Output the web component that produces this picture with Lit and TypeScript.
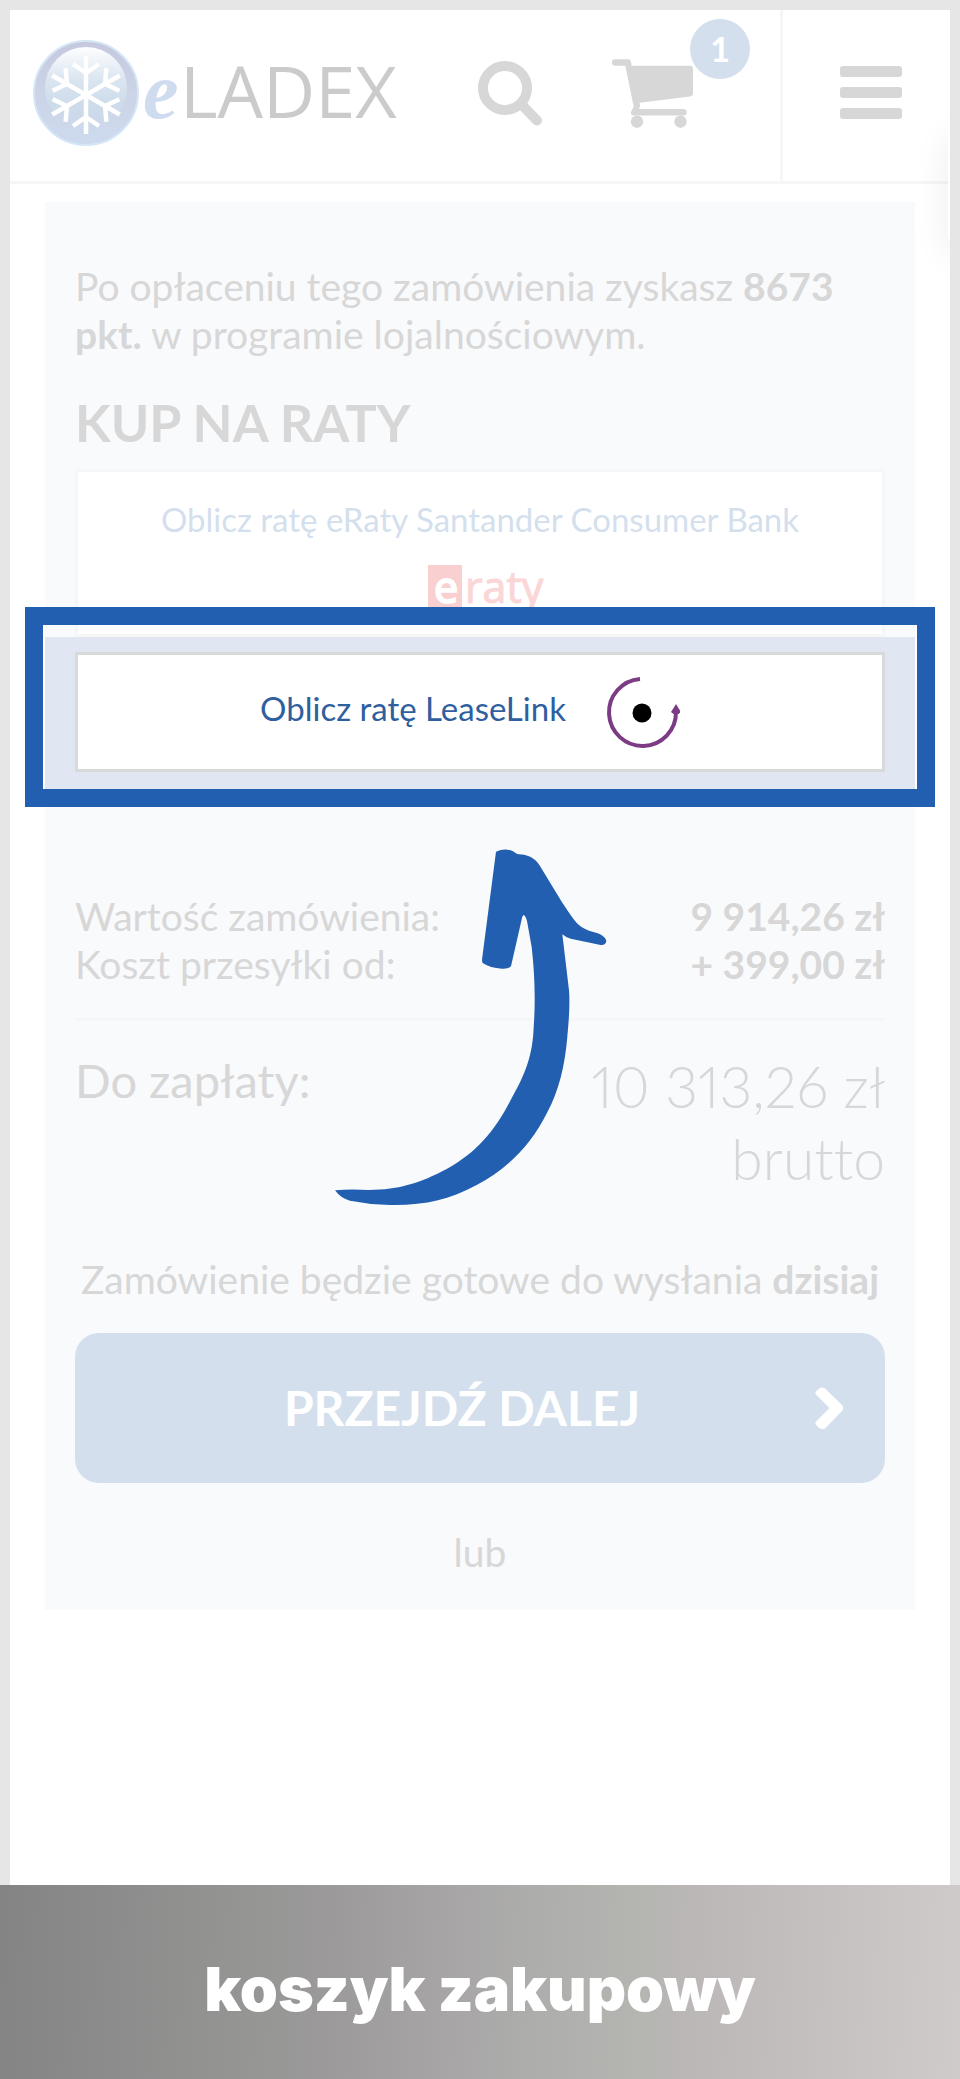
import { LitElement, html, css, svg } from "lit";
import { customElement } from "lit/decorators.js";

const flakeArms = [0, 60, 120, 180, 240, 300];

@customElement("shop-header")
class ShopHeader extends LitElement {
  static styles = css`
    :host { display: block; }
    .bar {
      display: flex;
      align-items: stretch;
      height: 171px;
      border-bottom: 3px solid #f6f6f6;
    }
    .logo { display: block; margin: 20px auto 0 14px; }
    .logo svg, .icon svg { display: block; }
    .word { font-family: "Open Sans", "Noto Sans", sans-serif; font-size: 72px; font-weight: 500; }
    .script { font-family: "Liberation Serif", serif; font-size: 80px; font-style: italic; font-weight: 700; }
    .icons { display: flex; align-items: flex-start; gap: 69px; padding: 48px 86px 0 0; }
    .icon {
      display: block;
      position: relative;
      padding: 0;
      border: 0;
      background: none;
      color: #d7d7d7;
      cursor: pointer;
    }
    .badge {
      position: absolute;
      left: 78px;
      top: -39px;
      width: 60px;
      height: 60px;
      border-radius: 50%;
      background: #d4dfee;
      color: #fff;
      font: 700 34px/60px Lato, sans-serif;
      text-align: center;
    }
    .menu {
      display: flex;
      align-items: center;
      box-sizing: border-box;
      width: 170px;
      padding: 0 0 6px 57px;
      border-left: 3px solid #f6f6f6;
    }
  `;

  render() {
    return html`
      <header class="bar">
        <a class="logo" href="#" aria-label="eLADEX">
          <svg width="380" height="140" viewBox="24 30 380 140">
            <defs>
              <linearGradient id="ball" x1="0" y1="0" x2="0" y2="1">
                <stop offset="0" stop-color="#c5c8df" />
                <stop offset="0.5" stop-color="#ccd4e7" />
                <stop offset="1" stop-color="#cddaee" />
              </linearGradient>
              <linearGradient id="gloss" x1="0" y1="0" x2="0" y2="1">
                <stop offset="0" stop-color="#fdfeff" />
                <stop offset="0.4" stop-color="#dae5f0" />
                <stop offset="0.7" stop-color="#cddcea" />
                <stop offset="1" stop-color="#cddaec" stop-opacity="0" />
              </linearGradient>
            </defs>
            <circle cx="86" cy="93" r="52" fill="url(#ball)" stroke="#d5e6f6" stroke-width="2" />
            <circle cx="86" cy="88" r="41" fill="url(#gloss)" />
            <g fill="none" stroke="#fff" stroke-width="4.500">
              ${flakeArms.map((a) => svg`<path transform="rotate(${a} 86 95)" d="M86 95V56M73 64l13 9 13-9" />`)}
            </g>
            <text class="script" x="143" y="118" fill="#cfdcf0">e</text>
            <text class="word" x="180" y="118" fill="#cbcbcb">LADEX</text>
          </svg>
        </a>
        <nav class="icons">
          <button class="icon" aria-label="Szukaj">
            <svg width="65" height="70" viewBox="478 58 65 70" fill="none" stroke="currentColor">
              <circle cx="505" cy="88" r="22" stroke-width="10" />
              <path d="M522 105l15 15.500" stroke-width="10" stroke-linecap="round" />
            </svg>
          </button>
          <button class="icon" aria-label="Koszyk, 1 produkt">
            <svg width="82" height="70" viewBox="612 58 82 70" fill="currentColor">
              <path d="M615 59.300h13c2.500 0 3.200 2 3.500 6.500H690c2 0 3 1.200 3 3V93c0 2-1 3.200-3 3.500l-50.500 6.200c1 3 .6 4-.5 6.300h44.500a3.200 3.200 0 0 1 0 6.600H634c-3 0-3.600-2.300-2.600-4.600l2.300-4.500L625.300 65.800H615a3.200 3.200 0 0 1 0-6.500z" />
              <circle cx="637" cy="121.700" r="6.200" />
              <circle cx="680.500" cy="121.700" r="6.200" />
            </svg>
            <span class="badge">1</span>
          </button>
        </nav>
        <button class="icon menu" aria-label="Menu">
          <svg width="62" height="53" viewBox="0 0 62 53" fill="currentColor">
            <rect width="62" height="11" rx="3" />
            <rect y="21" width="62" height="11" rx="3" />
            <rect y="42" width="62" height="11" rx="3" />
          </svg>
        </button>
      </header>
    `;
  }
}

@customElement("order-summary")
class OrderSummary extends LitElement {
  static styles = css`
    :host {
      display: block;
      margin: 18px 35px 0;
      padding: 60px 0 34px;
      background: #f9fafc;
      color: #d7d7d7;
      font: 39px/48px Lato, sans-serif;
      font-variant-ligatures: none;
    }
    p, h2, dl, dd { margin: 0; }
    .block { margin-left: 30px; margin-right: 30px; }
    .heading { margin-top: 32px; font-size: 52px; line-height: 64px; font-weight: 700; }
    .offer {
      display: flex;
      border: 3px solid #f6f6f6;
      background: #fff;
      color: #d4dfee;
      font-size: 33px;
      line-height: 40px;
      text-decoration: none;
    }
    .santander { flex-direction: column; align-items: center; gap: 26px; margin-top: 15px; padding: 27px 0 15px; }
    .santander svg { display: block; }
    .eraty { font: 400 43px/44px "Open Sans", sans-serif; }
    .spotlight {
      position: relative;
      padding: 15px 30px 26px;
      background: #e0e7f2;
    }
    .lease {
      align-items: center;
      justify-content: center;
      gap: 38px;
      height: 114px;
      padding-right: 20px;
      border-color: #d7d9da;
      color: #2f5f9f;
    }
    .lease-name { padding-bottom: 8px; }
    .frame {
      position: absolute;
      inset: -30px -20px -9px;
      border: 18px solid #235fb0;
      pointer-events: none;
    }
    .arrow { position: absolute; left: calc(50% - 145px); top: 212px; pointer-events: none; }
    .row { display: flex; justify-content: space-between; }
    .row dd { text-align: right; font-weight: 700; }
    .costs { margin-top: 94px; padding-bottom: 30px; border-bottom: 3px solid #f6f6f6; }
    .total { margin-top: 29px; }
    .total dt { font-size: 47px; line-height: 60px; }
    .total dd { width: 40%; font-size: 57px; line-height: 72px; font-weight: 300; font-variant-numeric: proportional-nums; }
    .ready { margin-top: 61px; text-align: center; }
    .next {
      display: grid;
      grid-template-columns: 1fr 32px;
      align-items: center;
      width: calc(100% - 60px);
      height: 150px;
      margin-top: 30px;
      padding: 0 40px 0 0;
      border: 0;
      border-radius: 24px;
      background: #d4dfee;
      color: #fff;
      font: 700 48px/58px Lato, sans-serif;
      cursor: pointer;
    }
    .next-label { padding-left: 36px; }
    .or { margin-top: 45px; text-align: center; }
  `;

  render() {
    return html`
      <p class="block">Po opłaceniu tego zamówienia zyskasz <b>8673 pkt.</b> w programie lojalnościowym.</p>
      <h2 class="block heading">KUP NA RATY</h2>
      <a class="block offer santander" href="#">
        <span>Oblicz ratę eRaty Santander Consumer Bank</span>
        <svg width="144" height="54" viewBox="-20 0 144 54" role="img" aria-label="eraty">
          <rect width="34" height="44" fill="#f9cfcf" />
          <text class="eraty" x="6" y="38" fill="#fff" stroke="#fff" stroke-width="2">e</text>
          <text class="eraty" x="37" y="38" fill="#fad6d6" stroke="#fad6d6">raty</text>
        </svg>
      </a>
      <section class="spotlight">
        <a class="offer lease" href="#">
          <span class="lease-name">Oblicz ratę LeaseLink</span>
          <svg width="76" height="76" viewBox="604 674 76 76" aria-hidden="true">
            <path d="M640 679a33.500 33.500 0 1 0 36 33" fill="none" stroke="#7c3c83" stroke-width="4" />
            <path d="M671 712l5-8 5 8-2.500 2h-5z" fill="#7c3c83" />
            <circle cx="642" cy="713" r="9.500" fill="#000" />
          </svg>
        </a>
        <div class="frame"></div>
        <svg class="arrow" width="272" height="357" viewBox="105 86 816 1071" aria-hidden="true">
          <path fill="#235fb0" d="M588 94Q610 84 632 90C642 93 648 101 656 102C684 103 704 112 720 137L786 246C802 270 822 300 834 312C848 324 862 331 880 335C902 340 918 350 919 363Q916 376 902 374L812 355Q798 352 787 342L807 510C811 560 804 624 802 650C794 740 776 812 742 876C690 980 620 1045 530 1094C450 1138 370 1156 270 1154Q210 1153 150 1141Q122 1134 105 1110Q150 1106 205 1109C300 1108 360 1088 440 1046C530 998 590 925 634 835C680 755 698 700 701 620C707 540 704 460 695 380L681 302Q676 284 670 284Q666 288 664 302L633 438Q626 446 606 445Q570 443 548 428Q545 422 547 410Z" />
        </svg>
      </section>
      <dl class="block costs">
        <div class="row"><dt>Wartość zamówienia:</dt><dd>9 914,26 zł</dd></div>
        <div class="row"><dt>Koszt przesyłki od:</dt><dd>+ 399,00 zł</dd></div>
      </dl>
      <dl class="block row total"><dt>Do zapłaty:</dt><dd>10&nbsp;313,26&nbsp;zł brutto</dd></dl>
      <p class="ready">Zamówienie będzie gotowe do wysłania <b>dzisiaj</b></p>
      <button class="block next">
        <span class="next-label">PRZEJDŹ DALEJ</span>
        <svg width="32" height="46" viewBox="0 0 32 46" aria-hidden="true">
          <path d="M4 5.500Q8 .5 12 3.500L29 20Q31.500 23 29 26L12 43.500Q8 46 4 41Q1 38 3.500 36L16.500 23L3.500 10Q1 8 4 5.500Z" fill="#fff" />
        </svg>
      </button>
      <p class="or">lub</p>
    `;
  }
}

@customElement("app-root")
class AppRoot extends LitElement {
  static styles = css`
    :host { display: block; background: #e6e6e6; }
    .page { display: flex; flex-direction: column; min-height: 100vh; }
    .screen {
      position: relative;
      flex: 1;
      margin: 10px 10px 0;
      overflow: hidden;
      background: #fff;
    }
    .side-tab {
      position: absolute;
      right: -28px;
      top: 116px;
      width: 30px;
      height: 116px;
      border-radius: 6px;
      background: #fff;
      box-shadow: 0 12px 36px rgba(0, 0, 0, 0.08);
    }
    .caption {
      padding: 69px 20px 55px;
      background: linear-gradient(92deg, #848484, #979796 29%, #9c999a 34%, #a9a7a8 49%, #acacaa 54%, #b5b5b2 67%, #bbb7b6 72%, #cfcbca);
      color: #fff;
      font: 900 61px/70px Inter, sans-serif;
      text-align: center;
    }
  `;

  render() {
    return html`
      <div class="page">
        <main class="screen">
          <shop-header></shop-header>
          <order-summary></order-summary>
          <div class="side-tab"></div>
        </main>
        <footer class="caption">koszyk zakupowy</footer>
      </div>
    `;
  }
}
